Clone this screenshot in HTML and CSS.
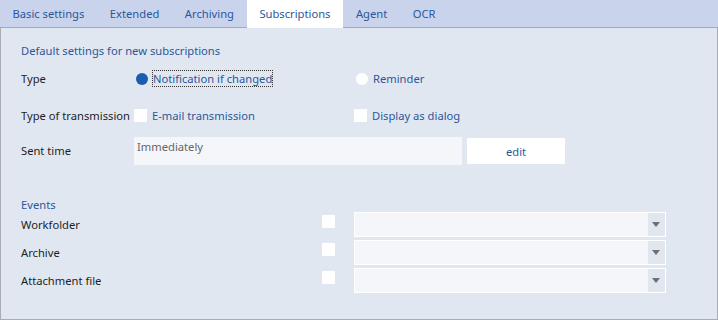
FILE: index.html
```html
<!DOCTYPE html>
<html lang="en">
<head>
    <meta charset="UTF-8">
    <title>Subscriptions</title>
    <link rel="stylesheet" href="styles.css">
</head>
<body>
    <div class="tabs">
        <div class="tab">Basic settings</div>
        <div class="tab">Extended</div>
        <div class="tab">Archiving</div>
        <div class="tab active">Subscriptions</div>
        <div class="tab">Agent</div>
        <div class="tab">OCR</div>
    </div>

    <div class="panel">
        <div class="section-title">Default settings for new subscriptions</div>

        <!-- type -->
        <div class="row row-type">
            <div class="label">Type</div>
            <div class="option">
                <span class="radio checked"></span>
                <span class="option-text focused">Notification if changed</span>
            </div>
            <div class="option">
                <span class="radio"></span>
                <span class="option-text">Reminder</span>
            </div>
        </div>

        <!-- transmission -->
        <div class="row row-trans">
            <div class="label">Type of transmission</div>
            <div class="option">
                <span class="check"></span>
                <span class="option-text">E-mail transmission</span>
            </div>
            <div class="option">
                <span class="check"></span>
                <span class="option-text">Display as dialog</span>
            </div>
        </div>

        <!-- sent time -->
        <div class="row row-time">
            <div class="label">Sent time</div>
            <div class="time-box">Immediately</div>
            <button class="edit-btn">edit</button>
        </div>

        <div class="section-title events-title">Events</div>

        <div class="event-row">
            <div class="event-label">Workfolder</div>
            <span class="check"></span>
            <div class="select"><span class="select-arrow"></span></div>
        </div>
        <div class="event-row">
            <div class="event-label">Archive</div>
            <span class="check"></span>
            <div class="select"><span class="select-arrow"></span></div>
        </div>
        <div class="event-row">
            <div class="event-label">Attachment file</div>
            <span class="check"></span>
            <div class="select"><span class="select-arrow"></span></div>
        </div>
    </div>
</body>
</html>
```

FILE: styles.css
```css
body {
    margin: 0;
    width: 718px;
    height: 320px;
    font-family: 'Noto Sans', 'Open Sans', sans-serif;
    font-size: 11.2px;
    color: #1e1e1e;
    background-color: #e1e7f1;
    overflow: hidden;
}

/* tab strip */
.tabs {
    display: flex;
    height: 27px;
    background-color: #c9d3ec;
    border-bottom: 1px solid #a3aab8;
}
.tab {
    padding: 0 13px 0 12.5px;
    line-height: 27px;
    color: #2b579a;
    white-space: nowrap;
}
.active {
    background-color: #ffffff;
    height: 28px;
}

/* main panel */
.panel {
    height: 292px;
    box-sizing: border-box;
    border: 1px solid #a8adb5;
    border-top: none;
    padding: 13px 0 0 20px;
}
.section-title {
    color: #2b579a;
    height: 20px;
    line-height: 20px;
}

.row {
    display: flex;
    align-items: center;
}
.row-type {
    height: 35px;
}
.row-trans {
    height: 38px;
}
.row-time {
    height: 36px;
    align-items: flex-start;
    padding-top: 3px;
}
.label {
    width: 113px;
    flex: none;
    white-space: nowrap;
}
.row-time .label {
    line-height: 28px;
}
.option {
    width: 220px;
    display: flex;
    align-items: center;
}
.option-text {
    color: #2b579a;
    margin-left: 5px;
}
.focused {
    outline: 1px dotted #333;
}
.radio {
    width: 12px;
    height: 12px;
    border-radius: 50%;
    background-color: #ffffff;
    margin-left: 2px;
    flex: none;
}
.radio.checked {
    background-color: #1a5cae;
}
.check {
    display: inline-block;
    width: 13px;
    height: 13px;
    background-color: #ffffff;
    flex: none;
}

.time-box {
    width: 328px;
    height: 28px;
    box-sizing: border-box;
    background-color: #f4f6fa;
    color: #666;
    padding: 1px 3px;
    line-height: 18px;
}
.edit-btn {
    width: 98px;
    height: 26px;
    margin: 1px 0 0 5px;
    border: none;
    background-color: #ffffff;
    color: #2b579a;
    font-family: inherit;
    font-size: 11.2px;
}

.events-title {
    margin-top: 21px;
    height: 16px;
    line-height: 22px;
}
.event-row {
    display: flex;
    align-items: center;
    height: 28px;
}
.event-label {
    width: 301px;
}
.event-row .check {
    margin-top: -5px;
}
.select {
    width: 312px;
    height: 25px;
    box-sizing: border-box;
    margin-left: 19px;
    border: 1px solid #ffffff;
    background-color: #f4f6fa;
    display: flex;
    justify-content: flex-end;
}
.select-arrow {
    width: 17px;
    background-color: #e1e6ef;
    position: relative;
}
.select-arrow::after {
    content: "";
    position: absolute;
    left: 4px;
    top: 9px;
    border-left: 4px solid transparent;
    border-right: 4px solid transparent;
    border-top: 5px solid #6b6f78;
}
```
